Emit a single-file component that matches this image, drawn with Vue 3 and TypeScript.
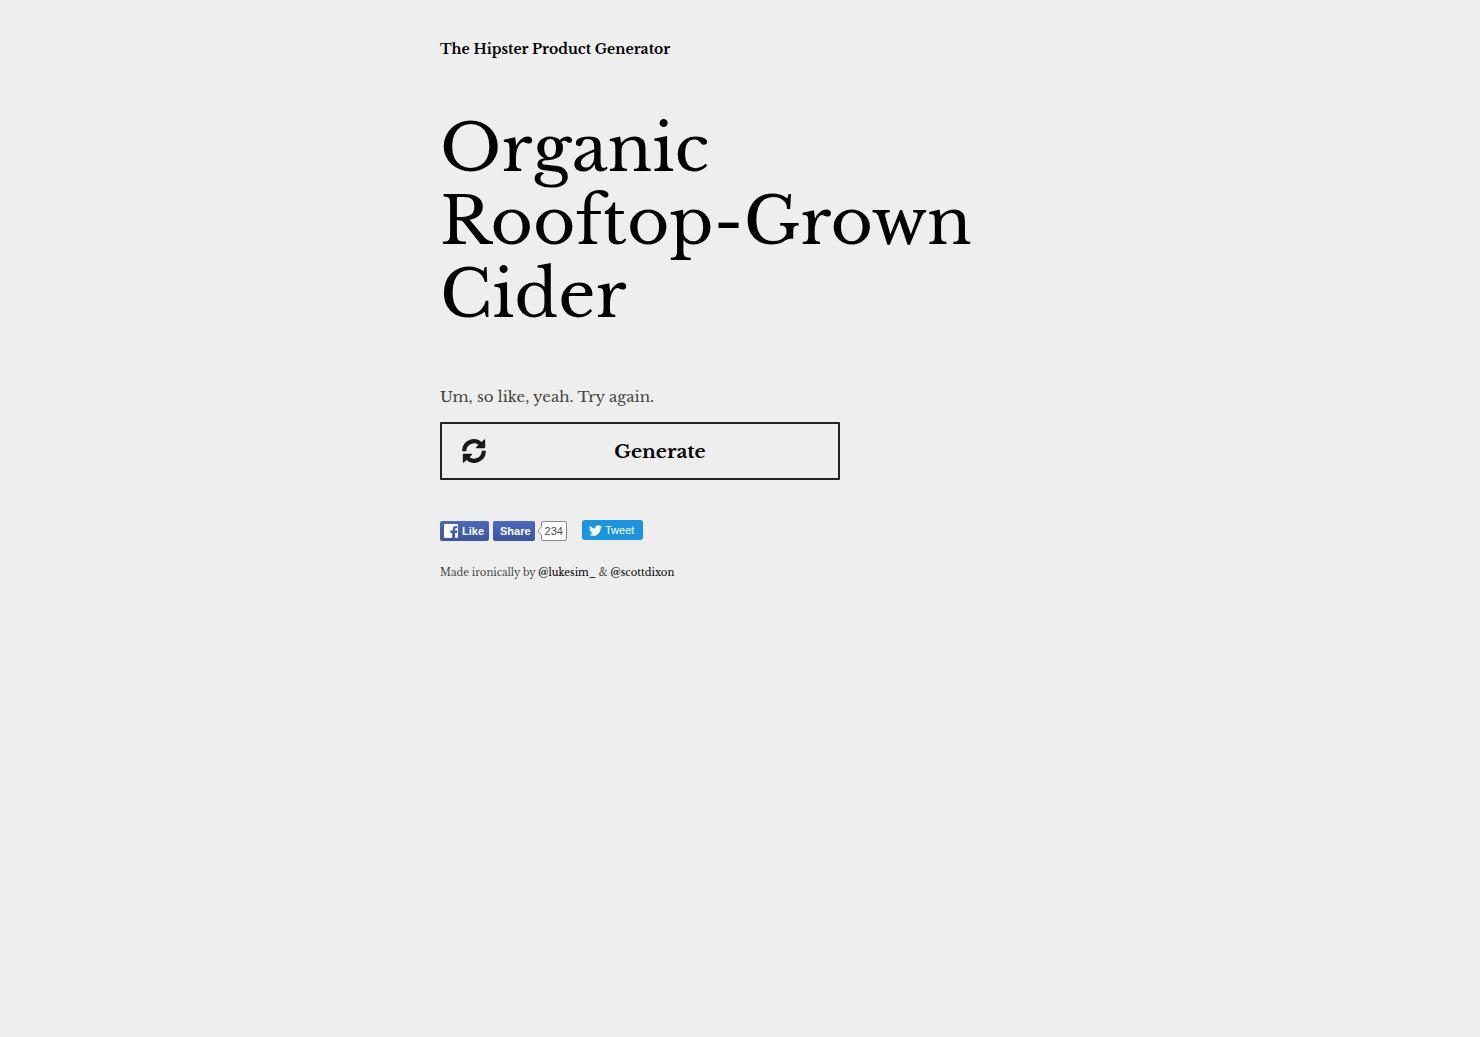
<script setup lang="ts">
import { computed, ref } from 'vue'

const adjectives: string[] = ['Organic', 'Artisan', 'Vintage', 'Fair-Trade']
const origins: string[] = ['Rooftop-Grown', 'Hand-Pressed', 'Barrel-Aged', 'Small-Batch']
const goods: string[] = ['Cider', 'Kombucha', 'Denim', 'Pickles']

const turn = ref(0)

const product = computed<string[]>(() => [
  adjectives[turn.value % adjectives.length],
  origins[turn.value % origins.length],
  goods[turn.value % goods.length],
])

function generate(): void {
  turn.value += 1
}
</script>

<template>
  <main class="page">
    <h2 class="site-title">The Hipster Product Generator</h2>

    <h1 class="product">
      <span v-for="word in product" :key="word" class="word">{{ word }}</span>
    </h1>

    <p class="tagline">Um, so like, yeah. Try again.</p>

    <button type="button" class="generate" @click="generate">
      <svg class="refresh" viewBox="0 0 24 24" aria-hidden="true">
        <g id="refresh-half">
          <path d="M2.200 12.200A9.800 9.800 0 0 1 19 5.200" fill="none" stroke="#1a1a1a" stroke-width="4.200" />
          <path d="M22.400 0.200q.8 0 .8.8v7.300q0 .9-.9.900h-7.600q-1.300-.2-.5-1.300z" fill="#1a1a1a" />
        </g>
        <use href="#refresh-half" transform="rotate(180 12 12)" />
      </svg>
      <span class="generate-label">Generate</span>
    </button>

    <div class="social">
      <div class="facebook">
        <button type="button" class="fb-button fb-like">
          <svg class="fb-logo" viewBox="0 0 14 14" aria-hidden="true">
            <path
              fill="#fff"
              d="M1 0h12a1 1 0 0 1 1 1v12a1 1 0 0 1-1 1h-1.900V8.900h1.900l.3-2.300h-2.200V5.400c0-.7.2-1.100 1.100-1.100h1.200V2.200c-.2 0-.9-.1-1.700-.1-1.800 0-2.900 1-2.900 2.900v1.600H6.300v2.300h1.900V14H1a1 1 0 0 1-1-1V1a1 1 0 0 1 1-1z"
            />
          </svg>
          <span>Like</span>
        </button>
        <button type="button" class="fb-button fb-share">Share</button>
        <svg class="nub" viewBox="0 0 5 10" aria-hidden="true">
          <path d="M5 0L1 5l4 5" fill="#fff" stroke="#8a8c92" />
        </svg>
        <span class="count">234</span>
      </div>
      <a class="tweet" href="#tweet">
        <svg class="bird" viewBox="0 0 24 24" aria-hidden="true">
          <path
            fill="#fff"
            d="M23.950 4.570a10 10 0 0 1-2.820.770 4.960 4.960 0 0 0 2.160-2.720c-.950.560-2 .960-3.130 1.180a4.920 4.920 0 0 0-8.380 4.480C7.690 8.090 4.070 6.130 1.640 3.160a4.900 4.900 0 0 0-.670 2.480c0 1.710.870 3.210 2.190 4.100a4.900 4.900 0 0 1-2.230-.620v.060a4.920 4.920 0 0 0 3.950 4.830 5 5 0 0 1-2.210.080 4.940 4.940 0 0 0 4.600 3.420A9.870 9.870 0 0 1 0 19.540a13.990 13.990 0 0 0 7.550 2.210c9.050 0 14-7.500 14-13.980 0-.210 0-.420-.020-.630a9.940 9.940 0 0 0 2.460-2.550z"
          />
        </svg>
        <span>Tweet</span>
      </a>
    </div>

    <p class="credits">
      Made ironically by <a href="#lukesim_">@lukesim_</a> &amp; <a href="#scottdixon">@scottdixon</a>
    </p>
  </main>
</template>

<style>
body {
  background: #eee;
}
</style>

<style scoped>
.page {
  box-sizing: border-box;
  max-width: 600px;
  margin: 0 auto;
  padding: 37px 0 40px;
  font-family: 'Libre Baskerville', 'Liberation Serif', serif;
  color: #444;
}

.site-title {
  margin: 0 0 51px;
  font-size: 14px;
  line-height: 24px;
  font-weight: 700;
  color: #000;
}

.product {
  margin: 0 0 54px;
  font-size: 65px;
  line-height: 73px;
  font-weight: 400;
  color: #000;
}

.word {
  display: block;
}

.tagline {
  margin: 0 0 13px;
  font-size: 15px;
  line-height: 24px;
}

.generate {
  box-sizing: border-box;
  display: flex;
  align-items: center;
  width: 100%;
  max-width: 400px;
  height: 58px;
  padding: 0 4px 0 20px;
  border: 2px solid #222;
  border-radius: 1px;
  background: transparent;
  font-family: inherit;
  font-size: 19px;
  font-weight: 700;
  color: #000;
  cursor: pointer;
}

.refresh {
  width: 24px;
  height: 24px;
}

.generate-label {
  flex: 1;
  text-align: center;
}

.social {
  display: flex;
  align-items: flex-start;
  gap: 15px;
  margin: 40px 0 22px;
  font-family: 'Liberation Sans', sans-serif;
  font-size: 11px;
}

.facebook {
  display: flex;
  align-items: center;
  padding-top: 1px;
}

.fb-button {
  display: flex;
  align-items: center;
  gap: 4px;
  box-sizing: border-box;
  height: 20px;
  margin-right: 4px;
  padding: 0 5px 0 4px;
  border: 0;
  border-radius: 2px;
  background: linear-gradient(#4c69ba, #3b55a0);
  font-family: inherit;
  font-size: 11px;
  font-weight: 700;
  color: #fff;
  cursor: pointer;
}

.fb-share {
  margin-right: 2px;
  padding: 0 4px 0 7px;
}

.fb-logo {
  width: 14px;
  height: 14px;
}

.nub {
  position: relative;
  z-index: 1;
  width: 5px;
  height: 10px;
  margin-right: -1px;
}

.count {
  box-sizing: border-box;
  height: 20px;
  padding: 0 3px;
  border: 1px solid #8a8c92;
  border-radius: 2px;
  background: #fff;
  line-height: 18px;
  color: #4b4f56;
}

.tweet {
  display: flex;
  align-items: center;
  gap: 3px;
  box-sizing: border-box;
  height: 20px;
  padding: 0 9px 0 7px;
  border-radius: 3px;
  background: #1b95e0;
  color: #fff;
  text-decoration: none;
}

.bird {
  width: 13px;
  height: 13px;
}

.credits {
  margin: 0;
  font-size: 10px;
  line-height: 20px;
}

.credits a {
  color: #000;
  text-decoration: none;
}
</style>
